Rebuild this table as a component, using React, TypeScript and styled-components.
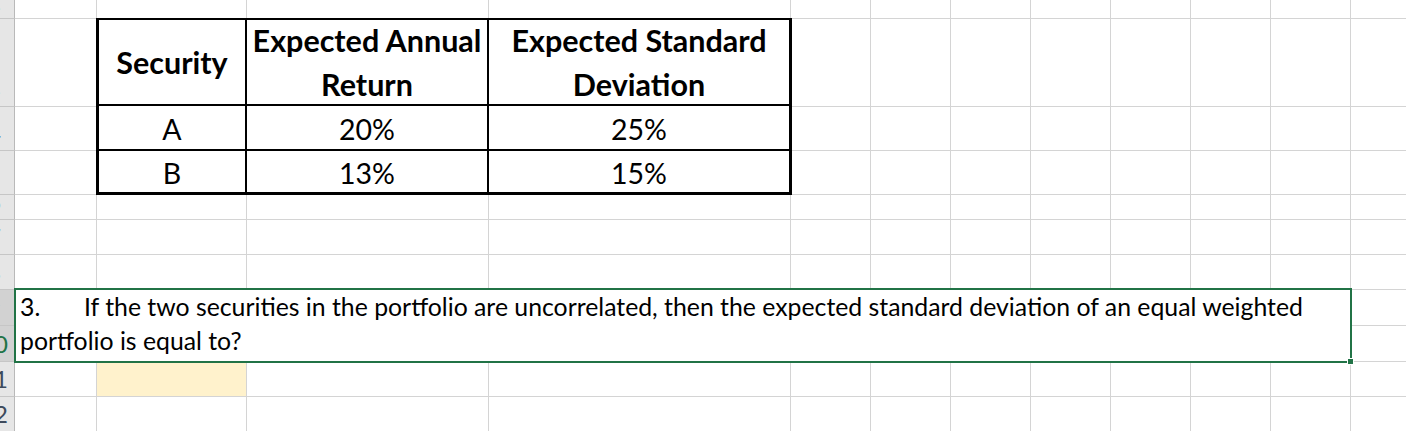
import React from "react";
import styled, { createGlobalStyle } from "styled-components";

const GlobalStyle = createGlobalStyle`
  html, body {
    margin: 0;
    padding: 0;
    background: #ffffff;
  }
  body {
    overflow: hidden;
    font-family: "Lato", "Open Sans", sans-serif;
    color: #000000;
  }
`

// column widths: row header, A, B, C, D, E..L
const COLS = [15, 82, 150, 242, 302, 80, 80, 80, 80, 80, 80, 80, 80]
// sheet rows 2..12
const ROWS = [19, 88, 44, 44, 25, 35, 35, 36, 36, 35, 35]
const FIRST_ROW = 2
const SELECTED_ROWS = [9, 10]

const GRID_LINE = "#d4d4d4"
const EXCEL_GREEN = "#217346"

const Sheet = styled.div`
  display: grid;
  grid-template-columns: ${COLS.map((c) => c + "px").join(" ")};
  grid-template-rows: ${ROWS.map((r) => r + "px").join(" ")};
  width: 1406px;
  height: 431px;
  overflow: hidden;
`

const RowHeader = styled.div<{ $row: number; $selected: boolean }>`
  grid-column: 1;
  grid-row: ${(p) => p.$row};
  background: ${(p) => (p.$selected ? "#d2d2d2" : "#e6e6e6")};
  border-right: 1px solid #b9b9b9;
  border-bottom: 1px solid #c6c6c6;
  overflow: hidden;
  display: flex;
  align-items: flex-end;
`

const RowNumber = styled.span<{ $selected: boolean }>`
  flex: 0 0 40px;
  margin-left: -26px;
  padding-bottom: 5px;
  text-align: center;
  font-size: 24px;
  line-height: 24px;
  color: ${(p) => (p.$selected ? EXCEL_GREEN : "#3d4a5c")};
`

const Cell = styled.div<{ $col: number; $row: number; $fill?: string }>`
  grid-column: ${(p) => p.$col};
  grid-row: ${(p) => p.$row};
  background: ${(p) => p.$fill || "#ffffff"};
  border-right: 1px solid ${GRID_LINE};
  border-bottom: 1px solid ${GRID_LINE};
`

const TableBox = styled.div`
  grid-column: 3 / 6;
  grid-row: 2 / 5;
  margin: -1px -1px 0 -1px;
  border: 3px solid #000000;
  border-top-width: 2px;
  background: #ffffff;
  display: grid;
  grid-template-columns: 148px 242px 300px;
  grid-template-rows: 86px 45px 41px;
  position: relative;
  z-index: 1;
`

const TableCell = styled.div<{ $head?: boolean; $lastCol?: boolean; $lastRow?: boolean }>`
  display: flex;
  align-items: center;
  justify-content: center;
  text-align: center;
  white-space: nowrap;
  border-right: ${(p) => (p.$lastCol ? "none" : "2px solid #000000")};
  border-bottom: ${(p) => (p.$lastRow ? "none" : "2px solid #000000")};
  font-size: ${(p) => (p.$head ? "30.5px" : "28.5px")};
  font-weight: ${(p) => (p.$head ? 700 : 400)};
  line-height: ${(p) => (p.$head ? "44px" : "32px")};
  padding-top: ${(p) => (p.$head ? "0" : "2px")};
`

const QuestionCell = styled.div`
  grid-column: 2 / 13;
  grid-row: 8 / 10;
  margin: -2px -1px -1px -1px;
  border: 2px solid ${EXCEL_GREEN};
  background: #ffffff;
  position: relative;
  z-index: 2;
  padding: 0 0 0 4px;
  font-size: 24.8px;
  line-height: 34px;
  white-space: pre;
  tab-size: 64px;
`

const FillHandle = styled.div`
  position: absolute;
  right: -4px;
  bottom: -4px;
  width: 5px;
  height: 5px;
  background: ${EXCEL_GREEN};
  border: 1px solid #ffffff;
`

const securities = [
  { name: "A", ret: "20%", dev: "25%" },
  { name: "B", ret: "13%", dev: "15%" },
]

const isCovered = (col: number, row: number) => {
  // table B3:D5 and merged question A9:K10
  if (col >= 3 && col <= 5 && row >= 2 && row <= 4) return true
  if (col >= 2 && col <= 12 && row >= 8 && row <= 9) return true
  return false
}

const App: React.FC = () => {
  const cells: React.ReactNode[] = []
  ROWS.forEach((_, ri) => {
    const row = ri + 1
    for (let col = 2; col <= COLS.length; col++) {
      if (isCovered(col, row)) continue
      const fill = col === 3 && row === 10 ? "#fff2cc" : undefined
      cells.push(<Cell key={`${col}-${row}`} $col={col} $row={row} $fill={fill} />)
    }
  })

  return (
    <>
      <GlobalStyle />
      <Sheet>
        {ROWS.map((_, ri) => {
          const num = FIRST_ROW + ri
          const selected = SELECTED_ROWS.includes(num)
          return (
            <RowHeader key={num} $row={ri + 1} $selected={selected}>
              <RowNumber $selected={selected}>{num}</RowNumber>
            </RowHeader>
          )
        })}
        {cells}
        <TableBox>
          <TableCell $head>Security</TableCell>
          <TableCell $head>
            Expected Annual
            <br />
            Return
          </TableCell>
          <TableCell $head $lastCol>
            Expected Standard
            <br />
            Deviation
          </TableCell>
          {securities.map((s, i) => {
            const last = i === securities.length - 1
            return (
              <React.Fragment key={s.name}>
                <TableCell $lastRow={last}>{s.name}</TableCell>
                <TableCell $lastRow={last}>{s.ret}</TableCell>
                <TableCell $lastRow={last} $lastCol>{s.dev}</TableCell>
              </React.Fragment>
            )
          })}
        </TableBox>
        <QuestionCell>
          {"3.\tIf the two securities in the portfolio are uncorrelated, then the expected standard deviation of an equal weighted\nportfolio is equal to?"}
          <FillHandle />
        </QuestionCell>
      </Sheet>
    </>
  )
}

export default App
